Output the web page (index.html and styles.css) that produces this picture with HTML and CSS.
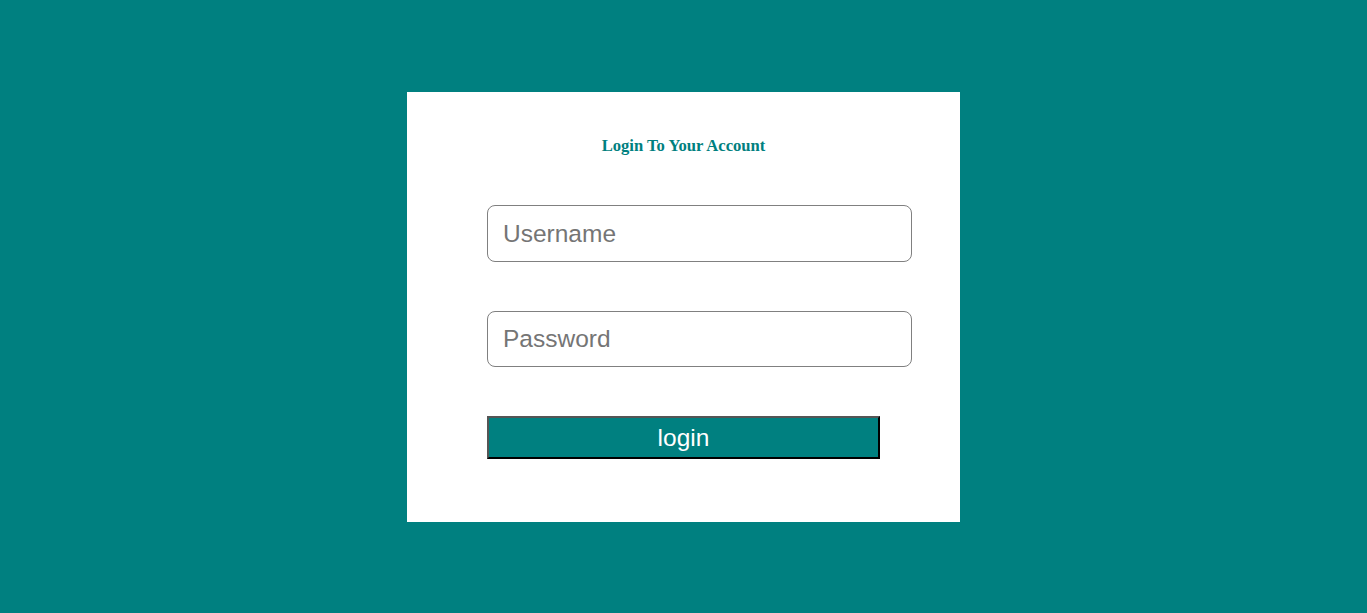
FILE: index.html
```html
<!DOCTYPE html>
<html>
<head>
<meta charset="utf-8">
<link rel="stylesheet" href="styles.css">
</head>
<body>
<div class="page">
  <form class="card">
    <h3 class="title">Login To Your Account</h3>
    <input class="field" type="text" placeholder="Username">
    <input class="field" type="password" placeholder="Password">
    <button class="btn" type="button">login</button>
  </form>
</div>
</body>
</html>
```
FILE: styles.css
```css
html, body {
  margin: 0;
  height: 100%;
  background: #008080;
}
.page {
  display: flex;
  justify-content: center;
  padding-top: 92px;
}
.card {
  width: 553px;
  height: 430px;
  box-sizing: border-box;
  background: #fff;
  padding: 45px 80px 0 80px;
  display: flex;
  flex-direction: column;
  align-items: flex-start;
}
.title {
  align-self: stretch;
  margin: 0 0 50px 0;
  line-height: 18px;
  text-align: center;
  font-family: "Liberation Serif", "Times New Roman", serif;
  font-size: 16.6px;
  font-weight: bold;
  color: #008080;
}
.field {
  width: 100%;
  height: 55px;
  box-sizing: content-box;
  padding: 0 15px;
  margin: 0 0 49px 0;
  border: 1px solid #808080;
  border-radius: 8px;
  font-family: "Liberation Sans", Arial, sans-serif;
  font-size: 24.5px;
  color: #333;
  background: #fff;
  outline: none;
}
.field + .field {
  height: 54px;
}
.field::placeholder {
  color: #757575;
}
.btn {
  width: 100%;
  height: 43px;
  box-sizing: border-box;
  border: 2px solid;
  border-color: #555 #000 #000 #555;
  background: #008080;
  color: #fff;
  font-family: "Liberation Sans", Arial, sans-serif;
  font-size: 24.5px;
  padding: 0;
}
```
